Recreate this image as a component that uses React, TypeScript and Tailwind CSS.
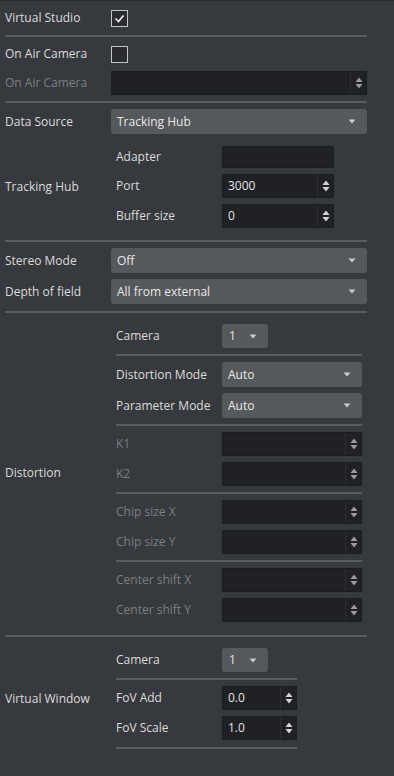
import React from "react"

const Sep = ({ className = "" }: { className?: string }) => (
  <div className={"h-[2px] bg-[#5a5d60] " + className} />
)

function Arrow() {
  return (
    <svg width="8" height="5" viewBox="0 0 8 5" className="shrink-0">
      <path d="M0.5 0.5h7L4 4.5z" fill="#c9cacb" />
    </svg>
  )
}

function SpinArrows({ disabled }: { disabled?: boolean }) {
  const c = disabled ? "#9a9c9e" : "#d4d5d6"
  return (
    <svg width="8" height="12" viewBox="0 0 8 12">
      <path d="M4 0.5L7.5 5h-7z" fill={c} />
      <path d="M0.5 7h7L4 11.5z" fill={c} />
    </svg>
  )
}

function Combo({ value, className = "" }: { value: string; className?: string }) {
  return (
    <div
      className={
        "flex items-center justify-between rounded-[3px] bg-[#56595c] pl-[6px] pr-[11px] text-[#e8e8e8] " +
        className
      }
    >
      <span>{value}</span>
      <Arrow />
    </div>
  )
}

function Spin({
  value = "",
  disabled,
  className = "",
}: {
  value?: string
  disabled?: boolean
  className?: string
}) {
  return (
    <div className={"flex bg-[#1f2124] border border-[#1b1c1f] " + className}>
      <div className="flex-1 flex items-center pl-[5px] text-[#e4e4e4]">{value}</div>
      <div className="w-[16px] flex items-center justify-center border-l border-[#2c2e31]">
        <SpinArrows disabled={disabled} />
      </div>
    </div>
  )
}

function Check({ checked }: { checked?: boolean }) {
  return (
    <div className="w-[17px] h-[17px] border border-[#c4c5c6] bg-[#2a2c2f] flex items-center justify-center">
      {checked && (
        <svg width="11" height="9" viewBox="0 0 11 9">
          <path d="M1.5 4.5l3 3 5-6" stroke="#f0f0f0" strokeWidth="1.6" fill="none" />
        </svg>
      )}
    </div>
  )
}

function Row({
  label,
  disabled,
  h = "h-[24px]",
  className = "",
  w = "w-[106px]",
  children,
}: {
  label: string
  disabled?: boolean
  h?: string
  className?: string
  w?: string
  children: React.ReactNode
}) {
  return (
    <div className={"flex items-center " + h + " " + className}>
      <div className={w + " shrink-0 " + (disabled ? "text-[#7c7f82]" : "")}>{label}</div>
      {children}
    </div>
  )
}

export default function App() {
  return (
    <div className="w-[394px] min-h-[776px] bg-[#36393d] border-t border-[#27292c] font-['Open_Sans',sans-serif] text-[12px] leading-none text-[#dcdcdc]">
      <div className="w-[362px] ml-[5px]">
        <Row label="Virtual Studio" h="h-[34px]">
          <Check checked />
        </Row>
        <Sep />
        <Row label="On Air Camera" h="h-[34px]">
          <Check />
        </Row>
        <Row label="On Air Camera" disabled>
          <Spin disabled className="flex-1 h-[24px]" />
        </Row>
        <Sep className="mt-[6px]" />
        <Row label="Data Source" h="h-[25px]" className="mt-[6px]">
          <Combo value="Tracking Hub" className="flex-1 h-[25px]" />
        </Row>

        {/* Tracking Hub */}
        <div className="flex pt-[12px] pb-[12px]">
          <div className="w-[106px] shrink-0 flex items-center">Tracking Hub</div>
          <div className="pl-[5px] flex flex-col gap-[6px]">
            <Row label="Adapter" h="h-[22px]">
              <div className="w-[112px] h-[22px] bg-[#1f2124] border border-[#1b1c1f]" />
            </Row>
            <Row label="Port">
              <Spin value="3000" className="w-[112px] h-[24px]" />
            </Row>
            <Row label="Buffer size">
              <Spin value="0" className="w-[112px] h-[24px]" />
            </Row>
          </div>
        </div>
        <Sep />
        <Row label="Stereo Mode" h="h-[25px]" className="mt-[6px]">
          <Combo value="Off" className="flex-1 h-[25px]" />
        </Row>
        <Row label="Depth of field" h="h-[25px]" className="mt-[6px]">
          <Combo value="All from external" className="flex-1 h-[25px]" />
        </Row>
        <Sep className="mt-[7px]" />

        {/* Distortion */}
        <div className="flex pt-[11px] pb-[13px]">
          <div className="w-[106px] shrink-0 flex items-center">Distortion</div>
          <div className="pl-[5px] w-[251px] flex flex-col">
            <Row label="Camera">
              <Combo value="1" className="w-[46px] h-[24px] pl-[7px] pr-[9px]" />
            </Row>
            <Sep className="mt-[6px]" />
            <Row label="Distortion Mode" h="h-[25px]" className="mt-[6px]">
              <Combo value="Auto" className="flex-1 h-[25px]" />
            </Row>
            <Row label="Parameter Mode" h="h-[25px]" className="mt-[6px]">
              <Combo value="Auto" className="flex-1 h-[25px]" />
            </Row>
            <Sep className="mt-[6px]" />
            <Row label="K1" disabled className="mt-[6px]">
              <Spin disabled className="flex-1 h-[24px]" />
            </Row>
            <Row label="K2" disabled className="mt-[6px]">
              <Spin disabled className="flex-1 h-[24px]" />
            </Row>
            <Sep className="mt-[6px]" />
            <Row label="Chip size X" disabled className="mt-[6px]">
              <Spin disabled className="flex-1 h-[24px]" />
            </Row>
            <Row label="Chip size Y" disabled className="mt-[6px]">
              <Spin disabled className="flex-1 h-[24px]" />
            </Row>
            <Sep className="mt-[6px]" />
            <Row label="Center shift X" disabled className="mt-[6px]">
              <Spin disabled className="flex-1 h-[24px]" />
            </Row>
            <Row label="Center shift Y" disabled className="mt-[6px]">
              <Spin disabled className="flex-1 h-[24px]" />
            </Row>
          </div>
        </div>
        <Sep />

        {/* Virtual Window */}
        <div className="flex pt-[11px] pb-[10px]">
          <div className="w-[106px] shrink-0 flex items-center">Virtual Window</div>
          <div className="pl-[5px] w-[186px] flex flex-col">
            <Row label="Camera">
              <Combo value="1" className="w-[46px] h-[24px] pl-[7px] pr-[9px]" />
            </Row>
            <Sep className="mt-[6px]" />
            <Row label="FoV Add" className="mt-[6px]">
              <Spin value="0.0" className="w-[75px] h-[24px]" />
            </Row>
            <Row label="FoV Scale" className="mt-[6px]">
              <Spin value="1.0" className="w-[75px] h-[24px]" />
            </Row>
            <Sep className="mt-[7px]" />
          </div>
        </div>
      </div>
    </div>
  )
}
